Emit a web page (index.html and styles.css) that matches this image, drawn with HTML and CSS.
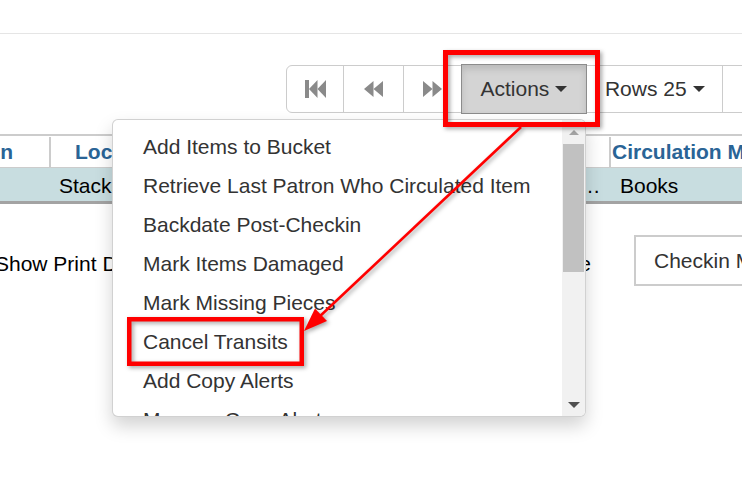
FILE: index.html
```html
<!DOCTYPE html>
<html lang="en">
<head>
<meta charset="utf-8">
<title>Checkin</title>
<link rel="stylesheet" href="styles.css">
</head>
<body>
<div class="page">
  <div class="topbar"></div>

  <div class="toolbar">
    <div class="btn-group">
      <button class="btn icon w58" disabled>
        <svg width="21" height="18" viewBox="0 0 21 18"><rect x="0" y="0" width="4" height="18"/><polygon points="4,9 12.5,0 12.5,18"/><polygon points="12.5,9 21,0 21,18"/></svg>
      </button>
      <button class="btn icon w60" disabled>
        <svg width="19" height="16" viewBox="0 0 19 16"><polygon points="0,8 9.5,0 9.5,16"/><polygon points="9.5,8 19,0 19,16"/></svg>
      </button>
      <button class="btn icon w57" disabled>
        <svg width="19" height="16" viewBox="0 0 19 16"><polygon points="19,8 9.5,0 9.5,16"/><polygon points="9.5,8 0,0 0,16"/></svg>
      </button>
      <button class="btn active">Actions <span class="caret"></span></button>
      <button class="btn">Rows 25 <span class="caret"></span></button>
      <button class="btn more"></button>
    </div>
  </div>

  <div class="grid">
    <div class="grid-row head">
      <div class="cell c1"><span>Action</span></div>
      <div class="cell c2">Location</div>
      <div class="cell c3">Call Number</div>
      <div class="cell c4">Circulation Modifier</div>
    </div>
    <div class="grid-row data">
      <div class="cell c1"></div>
      <div class="cell c2">Stacks</div>
      <div class="cell c3"><span class="ell">ML410.M5 S34 2004 Concerto for orchestra</span></div>
      <div class="cell c4">Books</div>
    </div>
  </div>

  <div class="options">
    <div class="checks">
      <span class="opt first">Show Print Dialog</span>
      <span class="opt">Strict Barcode</span>
    </div>
    <button class="btn outline">Checkin Modifiers <span class="caret"></span></button>
  </div>

  <div class="menu">
    <ul class="menu-list">
      <li>Add Items to Bucket</li>
      <li>Retrieve Last Patron Who Circulated Item</li>
      <li>Backdate Post-Checkin</li>
      <li>Mark Items Damaged</li>
      <li>Mark Missing Pieces</li>
      <li>Cancel Transits</li>
      <li>Add Copy Alerts</li>
      <li>Manage Copy Alerts</li>
      <li>Print Labels</li>
    </ul>
    <div class="scrollbar">
      <div class="sb-btn"><span class="arr-up"></span></div>
      <div class="sb-thumb"></div>
      <div class="sb-track"></div>
      <div class="sb-btn"><span class="arr-down"></span></div>
    </div>
  </div>

  <svg class="annot" width="742" height="499" viewBox="0 0 742 499">
    <g class="shadowed">
      <rect x="445.5" y="52.5" width="152" height="72" fill="none" stroke="#ff0000" stroke-width="5"/>
      <rect x="129.25" y="319.25" width="172.5" height="44.5" fill="none" stroke="#ff0000" stroke-width="4.5"/>
      <line x1="521" y1="127" x2="318" y2="318" stroke="#ff0000" stroke-width="2.6"/>
      <polygon points="304,331 315,308.5 327,321" fill="#ff0000"/>
    </g>
  </svg>
</div>
</body>
</html>
```

FILE: styles.css
```css
* { box-sizing: border-box; }

html, body {
  margin: 0;
  padding: 0;
  background: #ffffff;
}

body {
  width: 742px;
  height: 499px;
  overflow: hidden;
  font-family: "Liberation Sans", Arial, sans-serif;
  font-size: 21px;
  color: #333333;
}

.page {
  position: relative;
  width: 742px;
  height: 499px;
  overflow: hidden;
}

.topbar {
  height: 34px;
  border-bottom: 1px solid #e5e5e5;
}

.toolbar {
  margin-top: 31px;
  padding-left: 286px;
  display: flex;
  width: 1000px;
}

.btn-group {
  display: flex;
  flex-shrink: 0;
}

.btn {
  font-family: "Liberation Sans", Arial, sans-serif;
  font-size: 21px;
  color: #333333;
  background: #ffffff;
  border: 1.5px solid #cccccc;
  height: 48px;
  line-height: 30px;
  padding: 0 18px;
  margin: 0 0 0 -1.5px;
  display: flex;
  align-items: center;
  justify-content: center;
  white-space: nowrap;
  flex-shrink: 0;
  border-radius: 0;
}

.btn-group .btn:first-child {
  margin-left: 0;
  border-radius: 6px 0 0 6px;
}

.btn.icon {
  padding: 0;
  fill: #8a8a8a;
}

.btn.icon svg { display: block; }

.w58 { width: 58.5px; }
.w60 { width: 61px; }
.w57 { width: 59.5px; }

.btn.active {
  background: #d4d4d4;
  border-color: #8c8c8c;
  box-shadow: inset 0 4px 7px rgba(0, 0, 0, 0.125);
  height: 50px;
  margin-top: -1px;
  padding: 0 19px;
  position: relative;
  z-index: 1;
}

.btn.more {
  width: 80px;
}

.caret {
  display: inline-block;
  width: 0;
  height: 0;
  margin-left: 6px;
  border-top: 6px solid #333333;
  border-left: 6px solid transparent;
  border-right: 6px solid transparent;
}

/* grid */
.grid {
  margin-top: 20px;
  width: 742px;
}

.grid-row {
  display: flex;
  white-space: nowrap;
}

.grid-row.head {
  border-top: 2px solid #cccccc;
  height: 34px;
  font-weight: bold;
  color: #2a6496;
  border-bottom: 1px solid #cccccc;
  padding-top: 1px;
}

.grid-row.data {
  background: #c8dde0;
  height: 36px;
  border-bottom: 3px solid #a3a3a3;
  color: #000000;
  padding-top: 2px;
}

.cell {
  display: flex;
  align-items: center;
  overflow: hidden;
  flex-shrink: 0;
}

.c1 { width: 51px; justify-content: flex-end; padding-right: 36px; }
.c2 { width: 260px; }
.c3 { width: 300px; padding-right: 9px; }
.c4 { flex: 1; min-width: 0; }

.head .c1 { border-right: 2px solid #cccccc; }
.head .c2 { padding-left: 24px; }
.head .c3 { border-right: 2px solid #cccccc; }
.head .c4 { padding-left: 1px; }

.data .c2 { padding-left: 8px; }
.data .c4 { padding-left: 9px; }

.ell {
  display: block;
  width: 100%;
  overflow: hidden;
  text-overflow: ellipsis;
  white-space: nowrap;
}

/* options row */
.options {
  margin-top: 31px;
  display: flex;
  align-items: center;
  width: 900px;
}

.checks {
  width: 596px;
  margin-left: -5px;
  display: flex;
  justify-content: space-between;
  color: #000000;
  padding-top: 6px;
  flex-shrink: 0;
}

.btn.outline {
  margin-left: 43px;
  height: 51px;
  border: 2px solid #cccccc;
  padding: 0 18px;
  justify-content: flex-start;
}

/* dropdown menu */
.menu {
  position: absolute;
  left: 112px;
  top: 119px;
  width: 474px;
  height: 298px;
  background: #ffffff;
  border: 1px solid rgba(0, 0, 0, 0.18);
  border-radius: 6px;
  box-shadow: 0 9px 18px rgba(0, 0, 0, 0.175);
  display: flex;
  overflow: hidden;
  z-index: 5;
}

.menu-list {
  list-style: none;
  margin: 0;
  padding: 7.5px 0;
  flex: 1;
  overflow: hidden;
}

.menu-list li {
  padding: 4.5px 30px;
  line-height: 30px;
  color: #333333;
  white-space: nowrap;
}

.scrollbar {
  width: 23px;
  background: #f1f1f1;
  display: flex;
  flex-direction: column;
  flex-shrink: 0;
}

.sb-btn {
  height: 23px;
  display: flex;
  align-items: center;
  justify-content: center;
}

.sb-thumb {
  height: 128px;
  margin: 1px 1px 0 1px;
  background: #c1c1c1;
}

.sb-track { flex: 1; }

.arr-up {
  width: 0;
  height: 0;
  border-bottom: 5px solid #a3a3a3;
  border-left: 5px solid transparent;
  border-right: 5px solid transparent;
  margin-top: 1px;
}

.arr-down {
  width: 0;
  height: 0;
  border-top: 6px solid #505050;
  border-left: 6px solid transparent;
  border-right: 6px solid transparent;
}

/* annotations overlay */
.annot {
  position: absolute;
  left: 0;
  top: 0;
  z-index: 10;
  pointer-events: none;
}

.shadowed {
  filter: drop-shadow(2px 2px 2px rgba(0, 0, 0, 0.35));
}
```
